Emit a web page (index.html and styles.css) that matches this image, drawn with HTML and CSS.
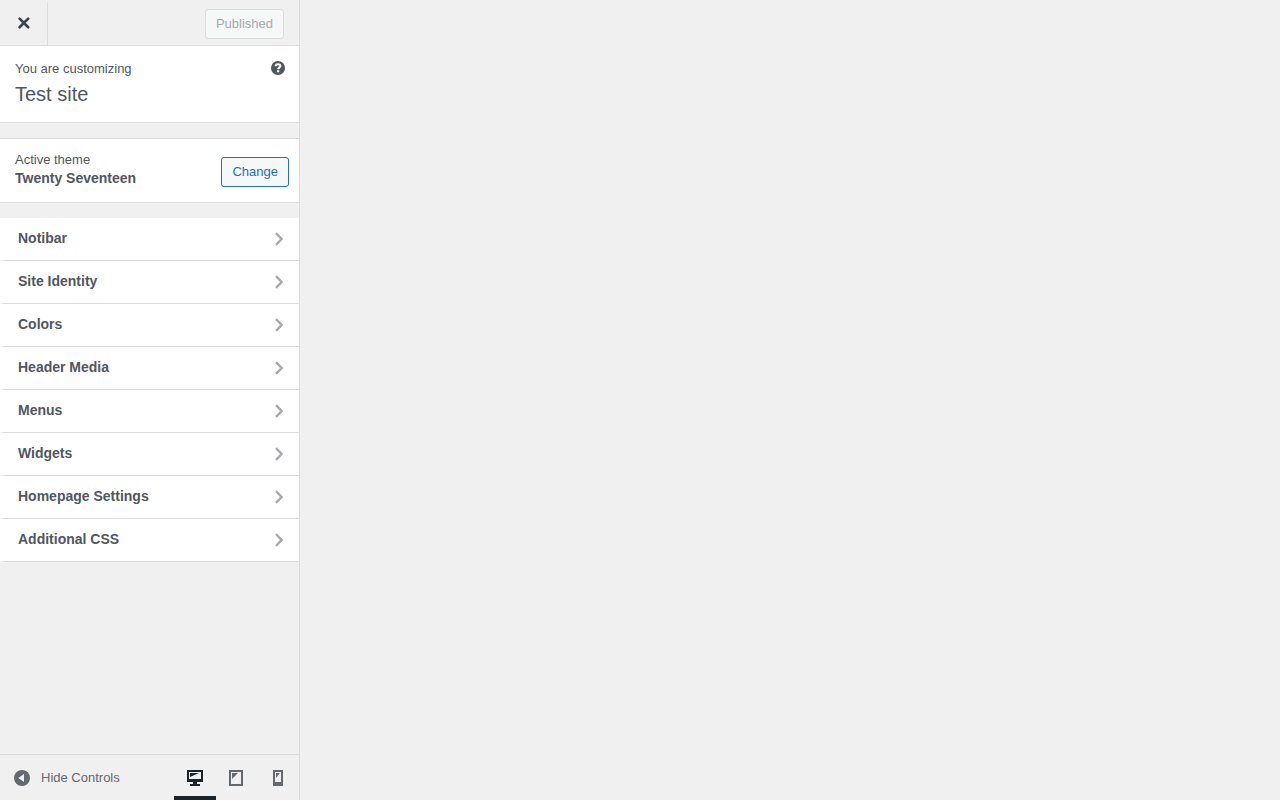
FILE: index.html
```html
<!DOCTYPE html>
<html lang="en">
<head>
    <meta charset="utf-8">
    <title>Customize: Test site</title>
    <link rel="stylesheet" href="styles.css">
</head>
<body>
    <div class="customizer">
        <form class="sidebar">
            <header class="header-actions">
                <a class="close" href="#" aria-label="Close the Customizer">
                    <svg width="20" height="20" viewBox="0 0 20 20"><path d="M5.6 5.6l8.6 8.6M14.2 5.6l-8.6 8.6" fill="none" stroke="currentColor" stroke-width="2.7" stroke-linecap="round"/></svg>
                </a>
                <button type="button" class="button save" disabled>Published</button>
            </header>

            <div class="controls">
                <div class="site-info">
                    <div>
                        <p class="label">You are customizing</p>
                        <h1 class="site-title">Test site</h1>
                    </div>
                    <button type="button" class="help" aria-label="Help">
                        <svg width="14" height="14" viewBox="0 0 14 14"><circle cx="7" cy="7" r="7" fill="currentColor"/><path d="M4.6 5.2C4.7 3.8 5.7 3.2 7 3.2s2.4.6 2.4 1.9c0 1.6-2.3 1.4-2.3 3.2" fill="none" stroke="#fff" stroke-width="2"/><path d="M6 9.3h2.2v2H6z" fill="#fff"/></svg>
                    </button>
                </div>

                <div class="theme-info">
                    <div>
                        <p class="label">Active theme</p>
                        <h2 class="theme-name">Twenty Seventeen</h2>
                    </div>
                    <button type="button" class="button change">Change</button>
                </div>

                <ul class="sections">
                    <li><a href="#">Notibar <svg class="arrow" viewBox="0 0 10 14"><path d="M2 1.2L7.6 7 2 12.8"/></svg></a></li>
                    <li><a href="#">Site Identity <svg class="arrow" viewBox="0 0 10 14"><path d="M2 1.2L7.6 7 2 12.8"/></svg></a></li>
                    <li><a href="#">Colors <svg class="arrow" viewBox="0 0 10 14"><path d="M2 1.2L7.6 7 2 12.8"/></svg></a></li>
                    <li><a href="#">Header Media <svg class="arrow" viewBox="0 0 10 14"><path d="M2 1.2L7.6 7 2 12.8"/></svg></a></li>
                    <li><a href="#">Menus <svg class="arrow" viewBox="0 0 10 14"><path d="M2 1.2L7.6 7 2 12.8"/></svg></a></li>
                    <li><a href="#">Widgets <svg class="arrow" viewBox="0 0 10 14"><path d="M2 1.2L7.6 7 2 12.8"/></svg></a></li>
                    <li><a href="#">Homepage Settings <svg class="arrow" viewBox="0 0 10 14"><path d="M2 1.2L7.6 7 2 12.8"/></svg></a></li>
                    <li><a href="#">Additional CSS <svg class="arrow" viewBox="0 0 10 14"><path d="M2 1.2L7.6 7 2 12.8"/></svg></a></li>
                </ul>
            </div>

            <footer class="footer-actions">
                <button type="button" class="collapse">
                    <svg width="16" height="16" viewBox="0 0 16 16"><circle cx="8" cy="8" r="8" fill="currentColor"/><path d="M10 4v8L4.3 8z" fill="#f0f0f0"/></svg>
                    Hide Controls
                </button>
                <div class="devices">
                    <button type="button" class="device active" aria-label="Desktop preview">
                        <svg width="16" height="16" viewBox="0 0 16 16" fill="currentColor"><path fill-rule="evenodd" d="M0 0h16v12h-6v2h3v2H3v-2h3v-2H0zM2 2v7h12V2z"/><path d="M3 3h9L3 7z"/></svg>
                    </button>
                    <button type="button" class="device" aria-label="Tablet preview">
                        <svg width="14" height="16" viewBox="0 0 14 16" fill="currentColor"><path fill-rule="evenodd" d="M0 0h14v16H0zM2 2v12h10V2z"/><path d="M3 3h6L3 9z"/></svg>
                    </button>
                    <button type="button" class="device" aria-label="Mobile preview">
                        <svg width="10" height="16" viewBox="0 0 10 16" fill="currentColor"><path fill-rule="evenodd" d="M0 0h10v16H0zM2 2v10h6V2z"/><path d="M3 3h4L3 8z"/></svg>
                    </button>
                </div>
            </footer>
        </form>
        <main class="preview"></main>
    </div>
</body>
</html>
```

FILE: styles.css
```css
* { box-sizing: border-box; }
body { margin: 0; background: #f0f0f0; color: #50575e; font: 13px/18px "Liberation Sans", Arial, sans-serif; }
h1, h2, p, ul { margin: 0; padding: 0; }
button { font: inherit; color: inherit; padding: 0; border: 0; background: none; cursor: pointer; }
svg { display: block; }

.customizer { display: flex; height: 100vh; }
.sidebar { display: flex; flex-direction: column; width: 300px; border-right: 1px solid #dcdcde; }
.preview { flex: 1; }

.header-actions { display: flex; align-items: flex-start; justify-content: space-between; height: 46px; padding-right: 15px; border-bottom: 1px solid #dcdcde; }
.close { display: flex; align-items: center; justify-content: center; width: 48px; height: 45px; padding-bottom: 3px; border-top: 4px solid transparent; border-right: 1px solid #dcdcde; color: #3c434a; }

.button { height: 30px; padding: 0 10px; border: 1px solid #2271b1; border-radius: 3px; background: #f6f7f7; color: #2271b1; }
.button:disabled { border-color: #dcdcde; color: #a7aaad; cursor: default; }
.save { margin-top: 9px; }

.controls { flex: 1; overflow: auto; }
.site-info { display: flex; align-items: flex-start; justify-content: space-between; padding: 14px 14px 15px 15px; border-bottom: 1px solid #dcdcde; background: #fff; }
.site-title { margin-top: 4px; font-size: 20px; line-height: 25px; font-weight: 400; }
.help { margin-top: 1px; }

.theme-info { display: flex; align-items: center; justify-content: space-between; margin: 15px 0; padding: 12px 10px 14px 15px; border: 1px solid #dcdcde; border-width: 1px 0; background: #fff; }
.theme-name { font-size: 14px; line-height: 19px; }
.change { margin-top: 4px; }

.sections { list-style: none; }
.sections a { display: flex; align-items: center; justify-content: space-between; padding: 10px 15px 11px 14px; border-left: 4px solid #fff; border-bottom: 1px solid #dcdcde; background: #fff; color: #50575e; font-size: 14px; font-weight: 600; line-height: 21px; text-decoration: none; }
.arrow { width: 10px; height: 14px; fill: none; stroke: #a7aaad; stroke-width: 2.4; }

.footer-actions { display: flex; justify-content: space-between; height: 46px; border-top: 1px solid #dcdcde; color: #646970; }
.collapse { display: flex; align-items: center; gap: 11px; padding-left: 14px; }
.devices { display: flex; }
.device { display: flex; align-items: center; justify-content: center; width: 42px; border-bottom: 4px solid transparent; padding-top: 4px; }
.device.active { margin-right: -1px; border-color: #1d2327; color: #1d2327; }
```
